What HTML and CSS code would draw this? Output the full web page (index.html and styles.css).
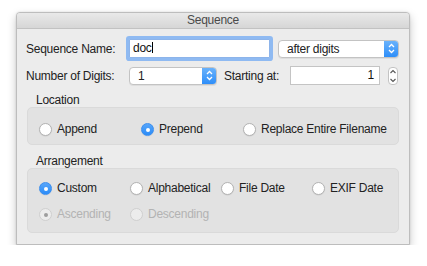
FILE: index.html
```html
<!DOCTYPE html>
<html lang="en">
<head>
    <meta charset="UTF-8">
    <title>Sequence</title>
    <link rel="stylesheet" href="styles.css">
</head>
<body>
    <div class="window">
        <div class="titlebar">Sequence</div>

        <div class="content">
            <div class="row row-name">
                <span class="label label-wide">Sequence Name:</span>
                <div class="textfield focused">doc<span class="caret"></span></div>
                <div class="popup popup-position">
                    <span class="popup-text">after digits</span>
                    <span class="popup-arrows">
                        <svg width="7" height="11" viewBox="0 0 7 11"><path d="M1 4 L3.5 1.5 L6 4 M1 7 L3.5 9.5 L6 7" fill="none" stroke="#fff" stroke-width="1.3"/></svg>
                    </span>
                </div>
            </div>

            <div class="row row-digits">
                <span class="label label-wide">Number of Digits:</span>
                <div class="popup popup-digits">
                    <span class="popup-text">1</span>
                    <span class="popup-arrows">
                        <svg width="7" height="11" viewBox="0 0 7 11"><path d="M1 4 L3.5 1.5 L6 4 M1 7 L3.5 9.5 L6 7" fill="none" stroke="#fff" stroke-width="1.3"/></svg>
                    </span>
                </div>
                <span class="label label-start">Starting at:</span>
                <div class="textfield number-field">1</div>
                <div class="stepper">
                    <svg width="10" height="18" viewBox="0 0 10 18"><path d="M2.5 6 L5 3.5 L7.5 6 M2.5 12 L5 14.5 L7.5 12" fill="none" stroke="#555" stroke-width="1.1"/></svg>
                </div>
            </div>

            <div class="group-title group-title-location">Location</div>
            <div class="group group-location">
                <div class="radio-row">
                    <label class="radio col-location"><span class="dot"></span>Append</label>
                    <label class="radio col-location checked"><span class="dot"></span>Prepend</label>
                    <label class="radio"><span class="dot"></span>Replace Entire Filename</label>
                </div>
            </div>

            <div class="group-title group-title-arrangement">Arrangement</div>
            <div class="group group-arrangement">
                <div class="radio-row">
                    <label class="radio col-arrange checked"><span class="dot"></span>Custom</label>
                    <label class="radio col-arrange"><span class="dot"></span>Alphabetical</label>
                    <label class="radio col-arrange"><span class="dot"></span>File Date</label>
                    <label class="radio"><span class="dot"></span>EXIF Date</label>
                </div>
                <div class="radio-row">
                    <label class="radio col-arrange disabled checked"><span class="dot"></span>Ascending</label>
                    <label class="radio disabled"><span class="dot"></span>Descending</label>
                </div>
            </div>
        </div>
    </div>
</body>
</html>
```

FILE: styles.css
```css
* {
    margin: 0;
    padding: 0;
    box-sizing: border-box;
}

body {
    background: #fff;
    padding: 12px 0 0 16px;
    font-family: "Liberation Sans", Arial, sans-serif;
    font-size: 12px;
    letter-spacing: -0.25px;
    color: #222;
}

.window {
    width: 394px;
    height: 233px;
    background: #ececec;
    border: 1px solid #bdbdbd;
    border-radius: 4px 4px 0 0;
    box-shadow: 0 4px 10px rgba(0, 0, 0, 0.22),
                0 0 2px rgba(0, 0, 0, 0.12);
    display: flex;
    flex-direction: column;
}

.titlebar {
    height: 16px;
    line-height: 15px;
    text-align: center;
    color: #4a4a4a;
    background: linear-gradient(#e9e9e9, #d6d6d6);
    border-bottom: 1px solid #c2c2c2;
    border-radius: 3px 3px 0 0;
}

.content {
    padding: 10px 10px 0 9px;
    display: flex;
    flex-direction: column;
}

.row {
    display: flex;
    align-items: center;
}

.row-name {
    height: 19px;
}

.row-digits {
    height: 19px;
    margin-top: 8px;
}

.label-wide {
    width: 103px;
}

.label-start {
    width: 66px;
    margin-left: 7px;
}

.textfield {
    height: 19px;
    background: #fff;
    border: 1px solid #c4c4c4;
    line-height: 17px;
    padding: 0 3px;
    color: #111;
}

.textfield.focused {
    width: 141px;
    border-color: #8db4ea;
    box-shadow: 0 0 0 3px #8fbaf2;
    border-radius: 1px;
}

.caret {
    display: inline-block;
    width: 1px;
    height: 11px;
    background: #000;
    vertical-align: -1px;
}

.number-field {
    width: 90px;
    text-align: right;
    padding-right: 5px;
}

.popup {
    height: 18px;
    display: flex;
    background: #fff;
    border: 1px solid #c3c3c3;
    border-radius: 4px;
    box-shadow: 0 1px 0 rgba(0, 0, 0, 0.06);
    overflow: hidden;
}

.popup-position {
    width: 121px;
    margin-left: 8px;
}

.popup-digits {
    width: 88px;
}

.popup-text {
    flex: 1;
    line-height: 16px;
    padding-left: 8px;
}

.popup-digits .popup-text {
    padding-left: 8px;
}

.popup-arrows {
    width: 15px;
    display: flex;
    align-items: center;
    justify-content: center;
    background: linear-gradient(#6db4fb, #2a8cf9);
    margin: -1px -1px -1px 0;
}

.stepper {
    width: 10px;
    height: 18px;
    margin-left: 8px;
    background: #fff;
    border: 1px solid #c3c3c3;
    border-radius: 4px;
    display: flex;
    align-items: center;
    justify-content: center;
}

.stepper svg {
    flex-shrink: 0;
}

.group-title {
    line-height: 13px;
    padding-left: 10px;
}

.group-title-location {
    margin-top: 9px;
}

.group-title-arrangement {
    margin-top: 10px;
}

.group {
    margin-left: 1px;
    background: #e2e2e2;
    border: 1px solid #dadada;
    border-radius: 5px;
    padding-left: 11px;
}

.group-location {
    height: 38px;
    padding-top: 15px;
}

.group-arrangement {
    height: 65px;
    padding-top: 13px;
    display: flex;
    flex-direction: column;
    gap: 13px;
}

.radio-row {
    display: flex;
    height: 13px;
    align-items: center;
}

.radio {
    display: flex;
    align-items: center;
    gap: 5px;
    line-height: 13px;
    white-space: nowrap;
}

.col-location {
    width: 102px;
}

.col-arrange {
    width: 91px;
}

.dot {
    width: 13px;
    height: 13px;
    border-radius: 50%;
    background: #fff;
    border: 1px solid #b3b3b3;
    box-shadow: 0 0.5px 1px rgba(0, 0, 0, 0.1);
    flex-shrink: 0;
    position: relative;
}

.radio.checked .dot {
    background: linear-gradient(#58a6fa, #2b8cf8);
    border-color: #3a8ef0;
}

.radio.checked .dot::after {
    content: "";
    position: absolute;
    left: 3.5px;
    top: 3.5px;
    width: 4px;
    height: 4px;
    border-radius: 50%;
    background: #fff;
}

.radio.disabled {
    color: #b3b3b3;
}

.radio.disabled .dot {
    background: #ececec;
    border-color: #cfcfcf;
    box-shadow: none;
}

.radio.disabled.checked .dot::after {
    background: #9d9d9d;
}
```
